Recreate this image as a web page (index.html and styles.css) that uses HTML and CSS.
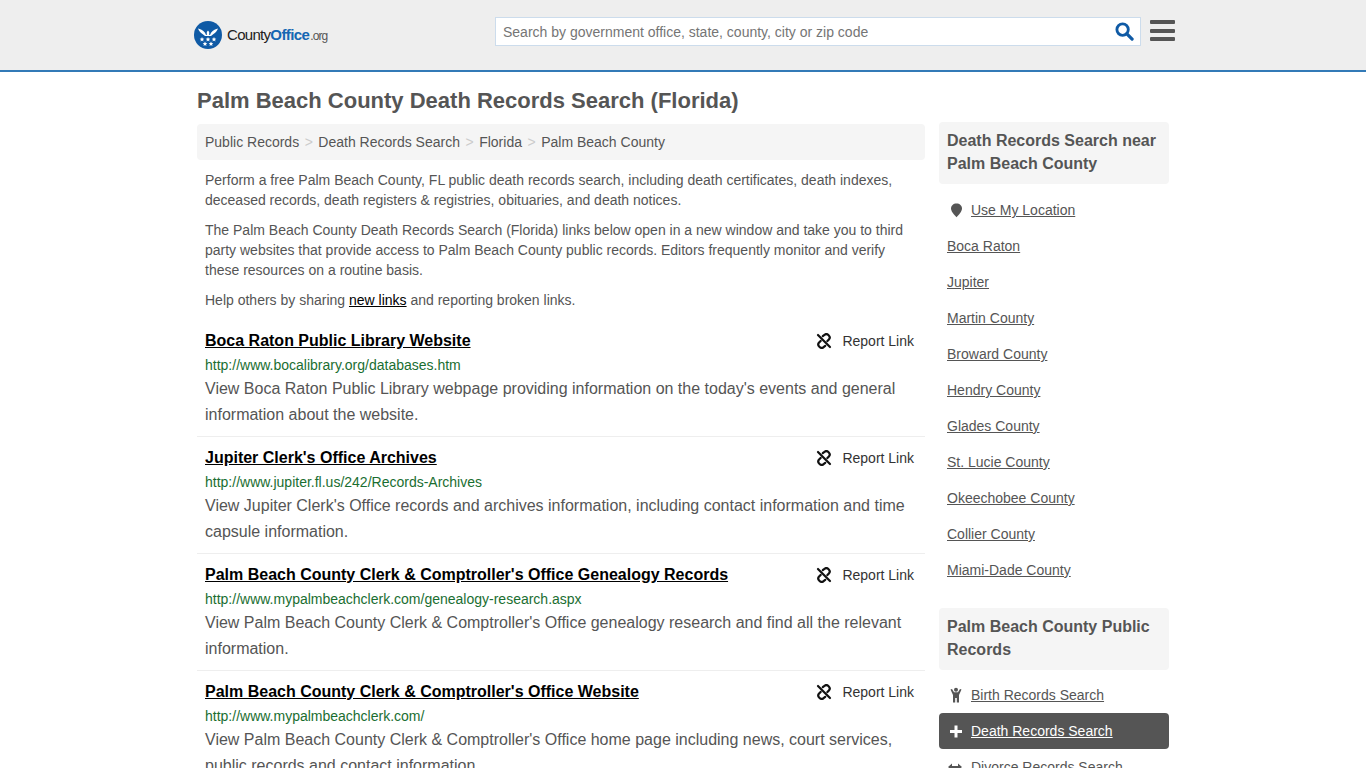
FILE: index.html
```html
<!DOCTYPE html>
<html lang="en">
<head>
<meta charset="utf-8">
<title>Palm Beach County Death Records Search (Florida)</title>
<link rel="stylesheet" href="styles.css">
</head>
<body>
<header class="site-header">
  <div class="header-inner">
    <a class="logo" href="#">
      <svg class="logo-mark" viewBox="0 0 28 28" width="28" height="28" aria-hidden="true">
        <circle cx="14" cy="14" r="14" fill="#0f5aa5"/>
        <path d="M4 7.500c2 .6 5 1.600 7 4.200l1 2.300h4l1-2.300c2-2.600 5-3.600 7-4.200-1 2.500-2.500 4.500-4.500 5.500l-2.500 2h-6l-2.500-2C6.500 12 5 10 4 7.500z" fill="#fff"/>
        <path d="M14 9.500l1.200 1.500v3h-2.400v-3z" fill="#fff"/>
        <path d="M8 16l.7 1.500 1.600.2-1.200 1.100.3 1.600L8 19.600l-1.400.8.300-1.600-1.200-1.100 1.600-.2zM14 16l.7 1.500 1.600.2-1.200 1.100.3 1.600-1.400-.8-1.400.8.300-1.600-1.200-1.100 1.600-.2zM20 16l.7 1.500 1.600.2-1.200 1.100.3 1.600-1.400-.8-1.400.8.300-1.600-1.200-1.100 1.600-.2zM11 20.500l.7 1.500 1.600.2-1.200 1.100.3 1.600-1.400-.8-1.400.8.300-1.600-1.200-1.100 1.600-.2zM17 20.500l.7 1.500 1.600.2-1.200 1.100.3 1.600-1.400-.8-1.400.8.300-1.600-1.200-1.100 1.600-.2z" fill="#fff"/>
      </svg>
      <span class="logo-text">County<b>Office</b><small>.org</small></span>
    </a>
    <form class="search">
      <input class="search-input" type="text" placeholder="Search by government office, state, county, city or zip code">
      <svg class="search-icon" viewBox="0 0 20 20" width="19" height="19" aria-hidden="true">
        <circle cx="8" cy="8" r="6" fill="none" stroke="#0f5aa5" stroke-width="3"/>
        <path d="M12.500 12.500L18 18" stroke="#0f5aa5" stroke-width="3.400" stroke-linecap="round"/>
      </svg>
    </form>
    <div class="burger"><span></span><span></span><span></span></div>
  </div>
</header>

<div class="page">
  <h1 class="page-title">Palm Beach County Death Records Search (Florida)</h1>
  <div class="columns">
    <main class="main">
      <nav class="crumbs">
        <a href="#">Public Records</a><i>&gt;</i><a href="#">Death Records Search</a><i>&gt;</i><a href="#">Florida</a><i>&gt;</i><a href="#">Palm Beach County</a>
      </nav>
      <div class="intro">
        <p>Perform a free Palm Beach County, FL public death records search, including death certificates, death indexes, deceased records, death registers &amp; registries, obituaries, and death notices.</p>
        <p>The Palm Beach County Death Records Search (Florida) links below open in a new window and take you to third party websites that provide access to Palm Beach County public records. Editors frequently monitor and verify these resources on a routine basis.</p>
        <p>Help others by sharing <a href="#">new links</a> and reporting broken links.</p>
      </div>

      <article class="result">
        <div class="result-head">
          <a class="result-title" href="#">Boca Raton Public Library Website</a>
          <a class="report" href="#"><svg class="report-icon" viewBox="0 0 16 16" width="16" height="16" aria-hidden="true"><use href="#unlink"/></svg>Report Link</a>
        </div>
        <div class="result-url">http://www.bocalibrary.org/databases.htm</div>
        <p class="result-text">View Boca Raton Public Library webpage providing information on the today's events and general information about the website.</p>
      </article>

      <article class="result">
        <div class="result-head">
          <a class="result-title" href="#">Jupiter Clerk's Office Archives</a>
          <a class="report" href="#"><svg class="report-icon" viewBox="0 0 16 16" width="16" height="16" aria-hidden="true"><use href="#unlink"/></svg>Report Link</a>
        </div>
        <div class="result-url">http://www.jupiter.fl.us/242/Records-Archives</div>
        <p class="result-text">View Jupiter Clerk's Office records and archives information, including contact information and time capsule information.</p>
      </article>

      <article class="result">
        <div class="result-head">
          <a class="result-title" href="#">Palm Beach County Clerk &amp; Comptroller's Office Genealogy Records</a>
          <a class="report" href="#"><svg class="report-icon" viewBox="0 0 16 16" width="16" height="16" aria-hidden="true"><use href="#unlink"/></svg>Report Link</a>
        </div>
        <div class="result-url">http://www.mypalmbeachclerk.com/genealogy-research.aspx</div>
        <p class="result-text">View Palm Beach County Clerk &amp; Comptroller's Office genealogy research and find all the relevant information.</p>
      </article>

      <article class="result">
        <div class="result-head">
          <a class="result-title" href="#">Palm Beach County Clerk &amp; Comptroller's Office Website</a>
          <a class="report" href="#"><svg class="report-icon" viewBox="0 0 16 16" width="16" height="16" aria-hidden="true"><use href="#unlink"/></svg>Report Link</a>
        </div>
        <div class="result-url">http://www.mypalmbeachclerk.com/</div>
        <p class="result-text">View Palm Beach County Clerk &amp; Comptroller's Office home page including news, court services, public records and contact information.</p>
      </article>
    </main>

    <aside class="side">
      <h2 class="side-title">Death Records Search near Palm Beach County</h2>
      <ul class="side-list">
        <li><a class="with-icon" href="#"><svg class="side-icon" viewBox="0 0 16 16" width="16" height="16" aria-hidden="true"><path d="M9.500 1.500c3.200 0 5.500 2.100 5.500 5 0 2.800-3.200 6.500-5.500 8.800C7.200 13 4 9.300 4 6.500c0-2.900 2.300-5 5.500-5z" fill="#555"/></svg><span>Use My Location</span></a></li>
        <li><a href="#">Boca Raton</a></li>
        <li><a href="#">Jupiter</a></li>
        <li><a href="#">Martin County</a></li>
        <li><a href="#">Broward County</a></li>
        <li><a href="#">Hendry County</a></li>
        <li><a href="#">Glades County</a></li>
        <li><a href="#">St. Lucie County</a></li>
        <li><a href="#">Okeechobee County</a></li>
        <li><a href="#">Collier County</a></li>
        <li><a href="#">Miami-Dade County</a></li>
      </ul>
      <h2 class="side-title second">Palm Beach County Public Records</h2>
      <ul class="side-list tight">
        <li><a class="with-icon" href="#"><svg class="side-icon" viewBox="0 0 16 16" width="16" height="16" aria-hidden="true"><circle cx="9" cy="2.800" r="2" fill="#555"/><path d="M3.500 2.500l1.500-.6 2 3.300h4l2-3.300 1.500.6L12 8v7.500h-2.200v-4.500H8.200v4.500H6V8z" fill="#555"/></svg><span>Birth Records Search</span></a></li>
        <li class="active"><a class="with-icon" href="#"><svg class="side-icon" viewBox="0 0 16 16" width="16" height="16" aria-hidden="true"><path d="M7.500 2.500h3v4.500H15v3h-4.500v4.500h-3V10H3V7h4.500z" fill="#fff"/></svg><span>Death Records Search</span></a></li>
        <li><a class="with-icon" href="#"><svg class="side-icon" viewBox="0 0 16 16" width="16" height="16" aria-hidden="true"><path d="M1 8l4-3.500V7h6V4.500L15 8l-4 3.500V9H5v2.500z" fill="#555"/></svg><span>Divorce Records Search</span></a></li>
      </ul>
    </aside>
  </div>
</div>

<svg class="sprite" aria-hidden="true">
  <symbol id="unlink" viewBox="0 0 16 16">
    <path d="M6.800 3.200l1.600-1.300a2.900 2.900 0 0 1 4 .2l.4.400a2.900 2.900 0 0 1 .1 4l-1.500 1.600M9.200 12.800l-1.600 1.300a2.900 2.900 0 0 1-4-.2l-.4-.4a2.900 2.900 0 0 1-.1-4l1.500-1.600" fill="none" stroke="#111" stroke-width="2.200" stroke-linecap="round"/>
    <path d="M2 2l12 12" stroke="#111" stroke-width="2.200" stroke-linecap="round"/>
  </symbol>
</svg>
</body>
</html>
```
FILE: styles.css
```css
html { overflow: hidden; height: 768px; }
body {
  margin: 0;
  height: 768px;
  overflow: hidden;
  background: #fff;
  color: #555;
  font-family: "Liberation Sans", Arial, sans-serif;
  font-size: 14px;
  line-height: 20px;
}
a { color: inherit; }
.sprite { display: none; }

.site-header {
  height: 70px;
  background: #eee;
  border-bottom: 2px solid #337ab7;
}
.header-inner {
  width: 972px;
  margin: 0 auto;
  padding-top: 17px;
  display: flex;
  align-items: flex-start;
}
.logo {
  flex: none;
  display: flex;
  align-items: center;
  gap: 5px;
  margin-top: 4px;
  margin-left: -3px;
  width: 301px;
  text-decoration: none;
  color: #222;
}
.logo-mark { flex: none; }
.logo-text { font-size: 15px; letter-spacing: -.7px; color: #222; }
.logo-text b { font-weight: 700; letter-spacing: -.6px; color: #1567b3; }
.logo-text small { font-size: 12px; color: #555; letter-spacing: -.9px; margin-left: 1px; }

.search {
  flex: none;
  width: 646px;
  height: 29px;
  box-sizing: border-box;
  background: #fff;
  border: 1px solid #ccdcec;
  display: flex;
  align-items: center;
  padding: 0 6px 0 7px;
}
.search-input {
  flex: 1;
  min-width: 0;
  border: 0;
  outline: 0;
  padding: 0;
  background: transparent;
  font: 14px "Liberation Sans", Arial, sans-serif;
  color: #555;
}
.search-input::placeholder { color: #757575; opacity: 1; }
.search-icon { flex: none; }
.burger {
  flex: none;
  width: 25px;
  margin: 3px 0 0 9px;
  display: flex;
  flex-direction: column;
  gap: 4.5px;
}
.burger span { display: block; height: 4px; border-radius: 1px; background: #555; }

.page { width: 972px; margin: 0 auto; }
.page-title {
  margin: 17px 0 0;
  font-size: 22px;
  line-height: 24px;
  font-weight: 700;
  color: #555;
}
.columns { display: flex; gap: 14px; align-items: flex-start; margin-top: 9px; }
.main { width: 728px; flex: none; padding-top: 2px; }
.side { width: 230px; flex: none; }

.crumbs {
  height: 36px;
  padding: 0 8px;
  display: flex;
  align-items: center;
  background: #f5f5f5;
  border-radius: 4px;
}
.crumbs a { text-decoration: none; }
.crumbs i { font-style: normal; color: #ccc; margin: 0 5.5px; }

.intro { padding: 10px 8px 0; }
.intro p { margin: 0 0 10px; }
.intro a { color: #000; text-decoration: underline; }

.result { padding: 0 8px; border-bottom: 1px solid #eee; height: 116px; }
.result-head {
  display: flex;
  justify-content: space-between;
  align-items: center;
  padding-top: 9px;
  height: 24px;
}
.result-title { color: #000; font-size: 16px; font-weight: 700; text-decoration: underline; }
.report {
  display: flex;
  align-items: center;
  gap: 10px;
  color: #333;
  text-decoration: none;
  margin-right: 3px;
}
.report-icon { flex: none; }
.result-url { color: #1a6e31; line-height: 20px; margin-top: 2px; }
.result-text { margin: 1px 0 0; font-size: 16px; line-height: 26px; }

.side-title {
  margin: 0;
  padding: 7px 8px 9px;
  background: #f5f5f5;
  border-radius: 4px;
  font-size: 16px;
  line-height: 23px;
  font-weight: 700;
  color: #555;
}
.side-title.second { margin-top: 20px; }
.side-list { list-style: none; margin: 8px 0 0; padding: 0; }
.side-list li { height: 36px; display: flex; align-items: center; padding-left: 8px; border-radius: 4px; }
.side-list.tight { margin-top: 7px; }
.side-list a { color: #555; text-decoration: underline; }
.with-icon { display: flex; align-items: center; gap: 8px; }
.side-icon { flex: none; }
.side-list .active { background: #555; }
.side-list .active a { color: #fff; }
```
